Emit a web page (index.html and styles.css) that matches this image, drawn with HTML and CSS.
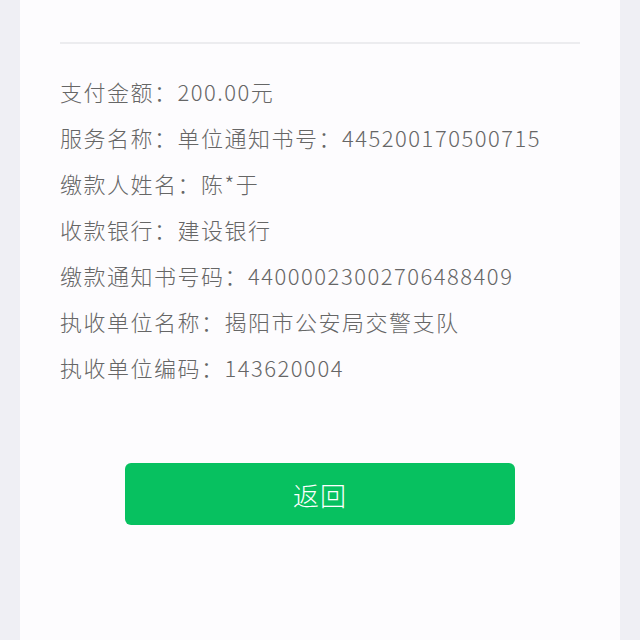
FILE: index.html
```html
<!DOCTYPE html>
<html lang="zh-CN">
<head>
<meta charset="utf-8">
<link rel="stylesheet" href="styles.css">
</head>
<body>
<div class="card">
  <div class="divider"></div>
  <ul class="info">
    <li>支付金额：200.00元</li>
    <li>服务名称：单位通知书号：445200170500715</li>
    <li>缴款人姓名：陈*于</li>
    <li>收款银行：建设银行</li>
    <li>缴款通知书号码：44000023002706488409</li>
    <li>执收单位名称：揭阳市公安局交警支队</li>
    <li>执收单位编码：143620004</li>
  </ul>
  <div class="actions">
    <button class="btn">返回</button>
  </div>
</div>
</body>
</html>
```
FILE: styles.css
```css
html, body {
  margin: 0;
  padding: 0;
  background: #efeff4;
  font-family: "Noto Sans CJK SC", "Noto Sans", sans-serif;
}
.card {
  margin: 0 20px;
  min-height: 640px;
  background: #fdfcfe;
  padding: 42px 40px 0;
  box-sizing: border-box;
}
.divider {
  height: 2px;
  background: #ececef;
}
.info {
  list-style: none;
  margin: 24px 0 0;
  padding: 0;
}
.info li {
  font-size: 22px;
  font-weight: 300;
  line-height: 46px;
  color: #666;
  letter-spacing: 1.5px;
  white-space: nowrap;
}
.actions {
  display: flex;
  justify-content: center;
  margin-top: 73px;
}
.btn {
  width: 390px;
  height: 62px;
  padding: 0;
  border: none;
  border-radius: 6px;
  background: #07c160;
  color: #fff;
  font-family: inherit;
  font-size: 26px;
  font-weight: 300;
  letter-spacing: 1px;
}
```
